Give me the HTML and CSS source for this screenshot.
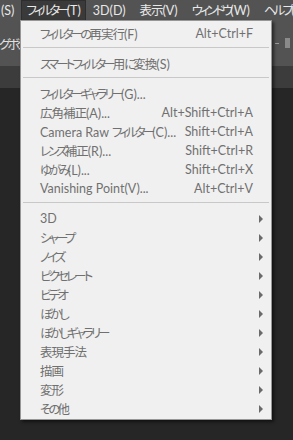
FILE: index.html
```html
<!DOCTYPE html>
<html lang="ja">
<head>
    <meta charset="UTF-8">
    <meta name="viewport" content="width=device-width, initial-scale=1.0">
    <title>フィルター</title>
    <link rel="stylesheet" href="styles.css">
</head>
<body>
    <div class="menubar">
        <span class="menubar-item menubar-first">(S)</span>
        <span class="menubar-item active"><span class="kana">フィルター</span>(T)</span>
        <span class="menubar-item">3D(D)</span>
        <span class="menubar-item"><span class="kanji">表示</span>(V)</span>
        <span class="menubar-item"><span class="kana">ウィンドウ</span>(W)</span>
        <span class="menubar-item"><span class="kana">ヘルプ</span>(H)</span>
    </div>
    <div class="optionsbar">
        <span class="options-label kana">グボタン</span>
        <span class="options-tools">
            <span class="tool-dash"></span>
            <span class="tool-box"></span>
        </span>
    </div>
    <div class="tabbar"></div>
    <div class="workspace"></div>

    <div class="menu">
        <div class="menu-item"><span><span class="kana">フィルターの</span><span class="kanji">再実行</span>(F)</span><span class="shortcut">Alt+Ctrl+F</span></div>
        <div class="separator"></div>
        <div class="menu-item"><span><span class="kana">スマートフィルター</span><span class="kanji">用</span><span class="kana">に</span><span class="kanji">変換</span>(S)</span></div>
        <div class="separator"></div>
        <div class="menu-item"><span><span class="kana">フィルターギャラリー</span>(G)...</span></div>
        <div class="menu-item"><span><span class="kanji">広角補正</span>(A)...</span><span class="shortcut">Alt+Shift+Ctrl+A</span></div>
        <div class="menu-item"><span>Camera Raw <span class="kana">フィルター</span>(C)...</span><span class="shortcut">Shift+Ctrl+A</span></div>
        <div class="menu-item"><span><span class="kana">レンズ</span><span class="kanji">補正</span>(R)...</span><span class="shortcut">Shift+Ctrl+R</span></div>
        <div class="menu-item"><span><span class="kana">ゆがみ</span>(L)...</span><span class="shortcut">Shift+Ctrl+X</span></div>
        <div class="menu-item"><span>Vanishing Point(V)...</span><span class="shortcut">Alt+Ctrl+V</span></div>
        <div class="separator"></div>
        <div class="menu-item sub"><span>3D</span><span class="arrow"></span></div>
        <div class="menu-item sub"><span class="kana">シャープ</span><span class="arrow"></span></div>
        <div class="menu-item sub"><span class="kana">ノイズ</span><span class="arrow"></span></div>
        <div class="menu-item sub"><span class="kana">ピクセレート</span><span class="arrow"></span></div>
        <div class="menu-item sub"><span class="kana">ビデオ</span><span class="arrow"></span></div>
        <div class="menu-item sub"><span class="kana">ぼかし</span><span class="arrow"></span></div>
        <div class="menu-item sub"><span class="kana">ぼかしギャラリー</span><span class="arrow"></span></div>
        <div class="menu-item sub"><span class="kanji">表現手法</span><span class="arrow"></span></div>
        <div class="menu-item sub"><span class="kanji">描画</span><span class="arrow"></span></div>
        <div class="menu-item sub"><span class="kanji">変形</span><span class="arrow"></span></div>
        <div class="menu-item sub"><span><span class="kana">その</span><span class="kanji">他</span></span><span class="arrow"></span></div>
    </div>
</body>
</html>
```

FILE: styles.css
```css
* {
    margin: 0;
    padding: 0;
    box-sizing: border-box;
}

body {
    font-family: Lato, 'Noto Sans CJK JP', sans-serif;
    font-size: 12.5px;
    font-feature-settings: "palt";
    background: #262626;
    height: 440px;
    overflow: hidden;
    position: relative;
}

/* the UI font in the shot has narrow kana, so tighten them more than kanji */
.kana {
    letter-spacing: -2.9px;
}

.kanji {
    letter-spacing: -1px;
}

.menubar {
    height: 20px;
    background: #535353;
    display: flex;
    align-items: stretch;
    white-space: nowrap;
    overflow: hidden;
    color: #e8e8e8;
}

.menubar-item {
    padding: 0 6px;
    line-height: 19px;
    border: 1px solid transparent;
    border-bottom: none;
}

.menubar-first {
    margin-left: -6px;
}

.menubar-item.active {
    padding: 0 4px;
    background: #3a3a3a;
    border-color: #2e2e2e;
}

.optionsbar {
    height: 46px;
    background: #535353;
    display: flex;
    align-items: center;
    justify-content: space-between;
    overflow: hidden;
    white-space: nowrap;
    color: #e0e0e0;
}

.options-label {
    margin-left: -1px;
}

.options-tools {
    display: flex;
    align-items: center;
    gap: 6px;
    margin-right: 3px;
}

.tool-dash {
    width: 4px;
    height: 1px;
    background: #9a9a9a;
}

.tool-box {
    width: 5px;
    height: 10px;
    background: #8a8a8a;
}

.tabbar {
    height: 22px;
    background: #3c3c3c;
}

.menu {
    position: absolute;
    top: 20px;
    left: 20px;
    width: 252px;
    padding: 3px 0 1px;
    background: #f0f0f0;
    border: 1px solid #979797;
    box-shadow: 2px 2px 3px rgba(0, 0, 0, 0.55);
    color: #707070;
}

.menu-item {
    height: 19px;
    display: flex;
    align-items: center;
    justify-content: space-between;
    padding: 0 18px 0 19px;
    white-space: nowrap;
}

.menu-item.sub {
    padding-right: 8px;
}

.separator {
    height: 1px;
    margin: 4px 2px 6px;
    background: #c8c8c8;
}

.arrow {
    width: 0;
    height: 0;
    border-top: 4px solid transparent;
    border-bottom: 4px solid transparent;
    border-left: 4px solid #6a6a6a;
}
```
